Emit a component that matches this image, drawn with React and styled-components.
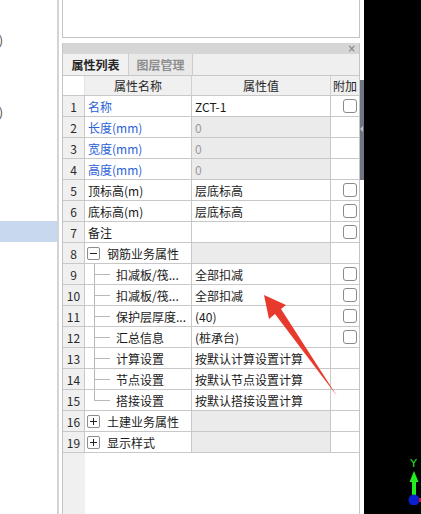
import styled, { createGlobalStyle } from "styled-components";

const GlobalStyle = createGlobalStyle`
  html, body {
    margin: 0;
    padding: 0;
    background: #ffffff;
  }
  body {
    font-family: "Noto Sans CJK SC", "Microsoft YaHei", sans-serif;
    font-size: 12px;
    color: #1a1a1a;
  }
`;

const rows = [
  { no: 1, name: "名称", value: "ZCT-1", blue: true, check: true },
  { no: 2, name: "长度(mm)", value: "0", blue: true, locked: true },
  { no: 3, name: "宽度(mm)", value: "0", blue: true, locked: true },
  { no: 4, name: "高度(mm)", value: "0", blue: true, locked: true },
  { no: 5, name: "顶标高(m)", value: "层底标高", check: true },
  { no: 6, name: "底标高(m)", value: "层底标高", check: true },
  { no: 7, name: "备注", value: "", check: true },
  { no: 8, name: "钢筋业务属性", group: "open" },
  { no: 9, name: "扣减板/筏...", value: "全部扣减", child: true, check: true },
  { no: 10, name: "扣减板/筏...", value: "全部扣减", child: true, check: true },
  { no: 11, name: "保护层厚度...", value: "(40)", child: true, check: true },
  { no: 12, name: "汇总信息", value: "(桩承台)", child: true, check: true },
  { no: 13, name: "计算设置", value: "按默认计算设置计算", child: true },
  { no: 14, name: "节点设置", value: "按默认节点设置计算", child: true },
  { no: 15, name: "搭接设置", value: "按默认搭接设置计算", child: true, last: true },
  { no: 16, name: "土建业务属性", group: "closed" },
  { no: 19, name: "显示样式", group: "closed" },
];

const App = () => {
  return (
    <>
      <GlobalStyle />
      <Page>
        <LeftPane>
          <LeftItem $mt={30}>
            <span>)</span>
          </LeftItem>
          <LeftItem $mt={52}>
            <span>)</span>
          </LeftItem>
          <LeftItem $mt={99} $active />
        </LeftPane>

        <MainColumn>
          <TopPanel />
          <PropPanel>
            <TitleBar>
              <CloseMark>×</CloseMark>
            </TitleBar>
            <TabRow>
              <Tab $active>属性列表</Tab>
              <Tab>图层管理</Tab>
            </TabRow>

            <HeaderRow>
              <HeaderCorner />
              <HeaderCell>属性名称</HeaderCell>
              <HeaderCell>属性值</HeaderCell>
              <HeaderCell $left>附加</HeaderCell>
            </HeaderRow>

            {rows.map((r) => (
              <Row key={r.no}>
                <NumCell>{r.no}</NumCell>
                <NameCell $blue={r.blue}>
                  {r.group && <Expander $open={r.group === "open"} />}
                  {r.child && <Guide $last={r.last} />}
                  <span>{r.name}</span>
                </NameCell>
                <ValueCell $shaded={r.locked || r.group}>{r.value}</ValueCell>
                <ExtraCell>{r.check && <CheckBox />}</ExtraCell>
              </Row>
            ))}
            <Filler />
          </PropPanel>
        </MainColumn>

        <Splitter>
          <SplitHandle />
        </Splitter>

        <Viewport>
          <svg width="16" height="50" viewBox="0 0 16 50">
            <text
              x="8.5"
              y="12"
              fill="#2ee62e"
              fontSize="11"
              textAnchor="middle"
              fontFamily="DejaVu Sans, sans-serif"
            >
              Y
            </text>
            <polygon points="4.5,27 9,16 13.5,27" fill="#22ee22" />
            <rect x="7" y="26" width="4" height="14" fill="#22ee22" />
            <circle cx="9" cy="45" r="5.5" fill="#0a1fd0" />
            <rect x="14" y="43" width="2" height="4" fill="#e01010" />
          </svg>
        </Viewport>

        <Annotation width="421" height="514" viewBox="0 0 421 514">
          <polygon
            points="264,295 286,305 281,309 337,396 275,314 269,319"
            fill="#e8392d"
          />
        </Annotation>
      </Page>
    </>
  );
};

export default App;

const Page = styled.div`
  position: relative;
  display: flex;
  width: 421px;
  height: 514px;
  overflow: hidden;
`;

const LeftPane = styled.div`
  display: flex;
  flex-direction: column;
  width: 57px;
  border-right: 2px solid #d4d4d4;
  margin-right: 3px;
  background: #ffffff;
`;

const LeftItem = styled.div`
  margin-top: ${(p) => p.$mt}px;
  height: ${(p) => (p.$active ? 21 : 20)}px;
  line-height: 20px;
  background: ${(p) => (p.$active ? "#c8d9ef" : "transparent")};
  overflow: hidden;
  white-space: nowrap;

  span {
    display: inline-block;
    margin-left: -1px;
    color: #3a3a3a;
  }
`;

const MainColumn = styled.div`
  display: flex;
  flex-direction: column;
  width: 298px;
  flex-shrink: 0;
`;

const TopPanel = styled.div`
  height: 37px;
  border: 1px solid #c4c4c4;
  border-top: none;
  background: #ffffff;
  margin-bottom: 5px;
`;

const PropPanel = styled.div`
  flex: 1;
  display: flex;
  flex-direction: column;
  border-left: 1px solid #c4c4c4;
  border-right: 1px solid #c4c4c4;
  min-height: 0;
`;

const TitleBar = styled.div`
  height: 11px;
  background: #d6d6d6;
  display: flex;
  justify-content: flex-end;
  align-items: center;
  padding-right: 3px;
`;

const CloseMark = styled.span`
  font-family: "DejaVu Sans", sans-serif;
  font-size: 10px;
  line-height: 11px;
  color: #7c7c7c;
`;

const TabRow = styled.div`
  display: flex;
  height: 21px;
  background: #efefef;
  border-bottom: 1px solid #c8c8c8;
`;

const Tab = styled.div`
  width: ${(p) => (p.$active ? 65 : 63)}px;
  border-right: 1px solid #cdcdcd;
  display: flex;
  align-items: center;
  justify-content: center;
  font-size: 12px;
  font-weight: 700;
  color: ${(p) => (p.$active ? "#262626" : "#8e8e8e")};
  background: ${(p) => (p.$active ? "#f1f1f1" : "#e9e9e9")};
`;

const gridCols = "22px 107px 139px 28px";

const HeaderRow = styled.div`
  display: grid;
  grid-template-columns: ${gridCols};
  height: 20px;
  border-bottom: 1px solid #c8c8c8;
  box-sizing: border-box;
`;

const HeaderCorner = styled.div`
  background: #ffffff;
  border-right: 1px solid #e2e2e2;
`;

const HeaderCell = styled.div`
  background: #f0f0f0;
  border-right: 1px solid #d0d0d0;
  display: flex;
  align-items: center;
  justify-content: ${(p) => (p.$left ? "flex-start" : "center")};
  padding-left: ${(p) => (p.$left ? "2px" : "0")};
  overflow: hidden;
  white-space: nowrap;
  color: #262626;

  &:last-child {
    border-right: none;
  }
`;

const Row = styled.div`
  display: grid;
  grid-template-columns: ${gridCols};
  height: 21px;
  border-bottom: 1px solid #c8c8c8;
  box-sizing: border-box;
`;

const NumCell = styled.div`
  background: #f0f0f0;
  border-right: 1px solid #c8c8c8;
  display: flex;
  align-items: center;
  justify-content: center;
  color: #2a2a2a;
`;

const NameCell = styled.div`
  display: flex;
  align-items: center;
  padding-left: 3px;
  border-right: 1px solid #c8c8c8;
  color: ${(p) => (p.$blue ? "#2c5fd8" : "#1a1a1a")};
  white-space: nowrap;
  overflow: hidden;
`;

const ValueCell = styled.div`
  display: flex;
  align-items: center;
  padding-left: 3px;
  border-right: 1px solid #c8c8c8;
  background: ${(p) => (p.$shaded ? "#ebebeb" : "#ffffff")};
  color: ${(p) => (p.$shaded ? "#9a9a9a" : "#1a1a1a")};
  white-space: nowrap;
  overflow: hidden;
`;

const ExtraCell = styled.div`
  display: flex;
  align-items: center;
  justify-content: flex-end;
  padding-right: 2px;
`;

const CheckBox = styled.span`
  width: 12px;
  height: 12px;
  border: 1px solid #8a8a8a;
  border-radius: 3px;
  background: #ffffff;
`;

const Expander = styled.span`
  position: relative;
  width: 11px;
  height: 11px;
  margin-left: -1px;
  margin-right: 7px;
  border: 1px solid #8c8c8c;
  border-radius: 2px;
  background: #ffffff;
  flex-shrink: 0;

  &::before {
    content: "";
    position: absolute;
    left: 2px;
    right: 2px;
    top: 5px;
    height: 1px;
    background: #222;
  }

  &::after {
    content: "";
    display: ${(p) => (p.$open ? "none" : "block")};
    position: absolute;
    top: 2px;
    bottom: 2px;
    left: 5px;
    width: 1px;
    background: #222;
  }
`;

const Guide = styled.span`
  align-self: stretch;
  width: 17px;
  margin-left: 6px;
  margin-right: 5px;
  flex-shrink: 0;
  background:
    linear-gradient(#b8b8b8, #b8b8b8) left top / 1px ${(p) => (p.$last ? "50%" : "100%")} no-repeat,
    linear-gradient(#b8b8b8, #b8b8b8) left 50% / 16px 1px no-repeat;
`;

const Filler = styled.div`
  flex: 1;
  background: linear-gradient(to right, #f0f0f0 22px, #ffffff 22px);
`;

const Splitter = styled.div`
  width: 4px;
  flex-shrink: 0;
  background: #ffffff;
  padding-top: 80px;
`;

const SplitHandle = styled.div`
  position: relative;
  height: 100px;
  background: #6f7682;

  &::after {
    content: "";
    position: absolute;
    left: 0;
    top: 46px;
    border-top: 3px solid transparent;
    border-bottom: 3px solid transparent;
    border-right: 3px solid #b9bec6;
  }
`;

const Viewport = styled.div`
  flex: 1;
  background: #000000;
  display: flex;
  justify-content: flex-end;
  align-items: flex-end;
  padding-bottom: 9px;
`;

const Annotation = styled.svg`
  position: absolute;
  left: 0;
  top: 0;
  pointer-events: none;
`;
